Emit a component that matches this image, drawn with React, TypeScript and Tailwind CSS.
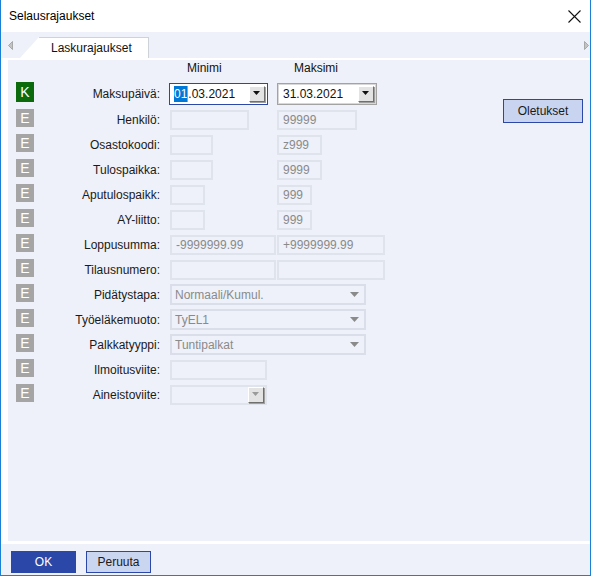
import React from 'react';

type Row = {
  badge: 'K' | 'E';
  label: string;
  cells: React.ReactNode;
  h?: string;
};

const Box = ({ w, value }: { w: string; value?: string }) => (
  <div className={`${w} h-[20px] shrink-0 border-2 border-[#dfe3eb] bg-[#eef1f9] pl-[4px] text-[12px] leading-[16px] text-[#8a8a8a] whitespace-nowrap`}>
    {value}
  </div>
);

const DropBtn = ({ dark }: { dark?: boolean }) => (
  <div className="flex h-[16px] w-[16px] items-center justify-center border border-t-white border-l-white border-b-[#6f6f6f] border-r-[#6f6f6f] bg-[#e3e3e3] shadow-[1px_1px_0_#a0a0a0]">
    <svg width="8" height="5" viewBox="0 0 8 5">
      <path d="M0 0 H7 L3.5 4 Z" fill={dark ? '#111' : '#9a9a9a'} />
    </svg>
  </div>
);

const Select = ({ value }: { value: string }) => (
  <div className="flex h-[21px] w-[196px] items-center justify-between border-2 border-[#d9dee8] bg-[#eef1f9] pl-[3px] pr-[5px] text-[12px] text-[#8a8a8a]">
    <span>{value}</span>
    <svg width="9" height="5" viewBox="0 0 9 5">
      <path d="M0 0 H9 L4.5 5 Z" fill="#8a8a8a" />
    </svg>
  </div>
);

const MinCol = ({ children }: { children: React.ReactNode }) => (
  <div className="flex w-[107px] shrink-0">{children}</div>
);

const rows: Row[] = [
  {
    badge: 'K',
    label: 'Maksupäivä:',
    h: 'h-[27px]',
    cells: (
      <>
        <MinCol>
          <div className="-ml-px flex h-[22px] w-[99px] items-center justify-between border border-[#2b47a8] bg-white pl-[4px] pr-[2px] text-[12px] text-[#111]">
            <span className="flex items-center">
              <span className="bg-[#0078d7] text-white leading-[16px]">01</span>
              <span className="h-[16px] w-px bg-[#ff8c1a]" />
              <span>.03.2021</span>
            </span>
            <DropBtn dark />
          </div>
        </MinCol>
        <div className="flex h-[22px] w-[100px] items-center justify-between border border-[#a3a3a3] bg-white pl-[5px] pr-[2px] text-[12px] text-[#111] shadow-[inset_0_0_0_1px_#d8d8d8]">
          <span>31.03.2021</span>
          <DropBtn dark />
        </div>
      </>
    ),
  },
  {
    badge: 'E',
    label: 'Henkilö:',
    cells: (
      <>
        <MinCol><Box w="w-[79px]" /></MinCol>
        <Box w="w-[80px]" value="99999" />
      </>
    ),
  },
  {
    badge: 'E',
    label: 'Osastokoodi:',
    cells: (
      <>
        <MinCol><Box w="w-[43px]" /></MinCol>
        <Box w="w-[45px]" value="z999" />
      </>
    ),
  },
  {
    badge: 'E',
    label: 'Tulospaikka:',
    cells: (
      <>
        <MinCol><Box w="w-[43px]" /></MinCol>
        <Box w="w-[45px]" value="9999" />
      </>
    ),
  },
  {
    badge: 'E',
    label: 'Aputulospaikk:',
    cells: (
      <>
        <MinCol><Box w="w-[35px]" /></MinCol>
        <Box w="w-[35px]" value="999" />
      </>
    ),
  },
  {
    badge: 'E',
    label: 'AY-liitto:',
    cells: (
      <>
        <MinCol><Box w="w-[35px]" /></MinCol>
        <Box w="w-[35px]" value="999" />
      </>
    ),
  },
  {
    badge: 'E',
    label: 'Loppusumma:',
    cells: (
      <>
        <MinCol><Box w="w-[106px]" value="-9999999.99" /></MinCol>
        <Box w="w-[108px]" value="+9999999.99" />
      </>
    ),
  },
  {
    badge: 'E',
    label: 'Tilausnumero:',
    cells: (
      <>
        <MinCol><Box w="w-[106px]" /></MinCol>
        <Box w="w-[108px]" />
      </>
    ),
  },
  { badge: 'E', label: 'Pidätystapa:', cells: <Select value="Normaali/Kumul." /> },
  { badge: 'E', label: 'Työeläkemuoto:', cells: <Select value="TyEL1" /> },
  { badge: 'E', label: 'Palkkatyyppi:', cells: <Select value="Tuntipalkat" /> },
  { badge: 'E', label: 'Ilmoitusviite:', cells: <Box w="w-[97px]" /> },
  {
    badge: 'E',
    label: 'Aineistoviite:',
    cells: (
      <div className="flex h-[20px] w-[97px] items-center justify-end border-2 border-[#dfe3eb] bg-[#eef1f9] pr-[1px]">
        <DropBtn />
      </div>
    ),
  },
];

export default function App() {
  return (
    <div className="h-[578px] w-[593px] overflow-hidden bg-white font-['Liberation_Sans',Arial,sans-serif] text-[12px] text-[#1a1a1a]">
      <div className="flex h-[576px] w-[591px] flex-col border-x border-b border-[#1a80d6]">
        {/* title bar */}
        <div className="flex h-[32px] shrink-0 items-center justify-between bg-white pl-[8px] pr-[8px]">
          <span className="text-[12px] text-black">Selausrajaukset</span>
          <svg width="13" height="13" viewBox="0 0 13 13" className="mr-[1px]">
            <path d="M0.5 0.5 L12.5 12.5 M12.5 0.5 L0.5 12.5" stroke="#111" strokeWidth="1.1" />
          </svg>
        </div>

        {/* tab strip */}
        <div className="flex h-[26px] shrink-0 items-end bg-[#eef1f9]">
          <div className="flex h-full w-[19px] items-center justify-center">
            <svg width="5" height="9" viewBox="0 0 5 9">
              <path d="M4.5 0.5 L0.5 4.5 L4.5 8.5 Z" fill="#c4c4c4" stroke="#9a9a9a" strokeWidth="0.8" />
            </svg>
          </div>
          <div className="flex h-[21px] items-end">
            <svg width="19" height="21" viewBox="0 0 19 21" className="block">
              <path d="M0 21 L19 0 V21 Z" fill="white" />
            </svg>
            <div className="flex h-[21px] w-[110px] items-center border-r border-t border-[#cfd2d8] bg-white pl-[12px] text-[12px] text-[#111]">
              Laskurajaukset
            </div>
          </div>
          <div className="flex h-full flex-1 items-center justify-end pr-[1px]">
            <svg width="5" height="9" viewBox="0 0 5 9">
              <path d="M0.5 0.5 L4.5 4.5 L0.5 8.5 Z" fill="#c4c4c4" stroke="#9a9a9a" strokeWidth="0.8" />
            </svg>
          </div>
        </div>

        {/* panel */}
        <div className="ml-[5px] flex h-[486px] shrink-0 border-b-[3px] border-l-2 border-t-2 border-white bg-[#eef1f9]">
          <div className="flex w-[400px] flex-col pl-[8px]">
            <div className="flex h-[20px] pl-[171px] pt-[1px] leading-[14px] text-[12px] text-[#111]">
              <span className="w-[107px]">Minimi</span>
              <span>Maksimi</span>
            </div>
            {rows.map((r) => (
              <div key={r.label} className={`flex items-center ${r.h ?? 'h-[25px]'}`}>
                <div
                  className={`mb-[3px] flex w-[18px] items-center justify-center text-[14px] text-white ${
                    r.badge === 'K' ? 'h-[20px] bg-[#0b6a0b]' : 'h-[18px] bg-[#a5a5a5]'
                  }`}
                >
                  {r.badge}
                </div>
                <div className="w-[126px] text-right text-[12px] text-[#1a1a1a]">{r.label}</div>
                <div className="ml-[10px] flex items-center">{r.cells}</div>
              </div>
            ))}
          </div>
          <div className="flex flex-1 items-start justify-end pr-[7px] pt-[39px]">
            <div className="flex h-[24px] w-[80px] items-center justify-center border border-[#2b47a8] bg-[#c9d4f0] text-[12px] text-[#1a1a1a]">
              Oletukset
            </div>
          </div>
        </div>

        {/* footer */}
        <div className="flex flex-1 items-start gap-[10px] bg-[#eef1f9] pl-[10px] pt-[7px]">
          <div className="flex h-[22px] w-[65px] items-center justify-center bg-[#2b47a8] text-[12px] text-white">OK</div>
          <div className="flex h-[22px] w-[65px] items-center justify-center border border-[#2b47a8] bg-[#cad5f0] text-[12px] text-[#1a1a1a]">
            Peruuta
          </div>
        </div>
      </div>
    </div>
  );
}
